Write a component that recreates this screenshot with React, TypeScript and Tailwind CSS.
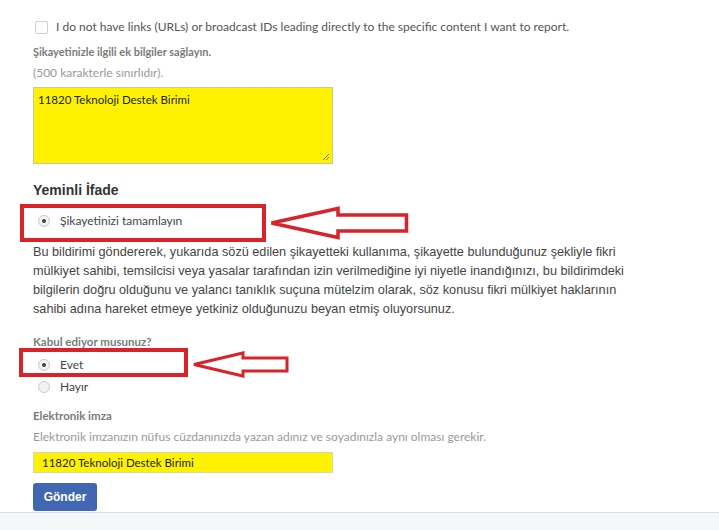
import React from 'react'

const formFont = { fontFamily: 'Lato, "Open Sans", sans-serif' }
const arial = { fontFamily: '"Liberation Sans", Arial, sans-serif' }

const Radio = ({ checked = false }: { checked?: boolean }) => (
  <span className="w-[12px] h-[12px] rounded-full border border-[#c8c8c8] bg-[#f2f2f2] flex items-center justify-center shrink-0">
    {checked && <span className="w-[4px] h-[4px] rounded-full bg-[#444]" />}
  </span>
)

const Arrow = ({ w, h, shaft, headW, stroke }: { w: number; h: number; shaft: number; headW: number; stroke: number }) => {
  const mid = h / 2
  const pts = [
    [stroke, mid],
    [headW, stroke],
    [headW, mid - shaft / 2],
    [w - stroke, mid - shaft / 2],
    [w - stroke, mid + shaft / 2],
    [headW, mid + shaft / 2],
    [headW, h - stroke],
  ]
    .map((p) => p.join(','))
    .join(' ')
  return (
    <svg width={w} height={h} viewBox={`0 0 ${w} ${h}`}>
      <polygon points={pts} fill="white" stroke="#d8232a" strokeWidth={stroke} strokeLinejoin="miter" />
    </svg>
  )
}

const App: React.FC = () => {
  return (
    <div className="relative w-[719px] h-[530px] bg-white overflow-hidden">
      <div className="pl-[33px] pt-[19px]">
        <div className="flex items-center h-[16px] gap-[8px] pl-[2px]" style={formFont}>
          <span className="w-[13px] h-[13px] rounded-[2px] border border-[#cfcfcf] bg-white" />
          <span className="text-[12px] text-[#555]">
            I do not have links (URLs) or broadcast IDs leading directly to the specific content I want to report.
          </span>
        </div>
        <div className="mt-[9px] h-[16px] text-[11px] font-bold text-[#7a7a7a] leading-[16px]" style={formFont}>
          Şikayetinizle ilgili ek bilgiler sağlayın.
        </div>
        <div className="mt-[5px] h-[16px] text-[12px] text-[#9a9a9a] leading-[16px]" style={formFont}>
          (500 karakterle sınırlıdır).
        </div>
        <div
          className="mt-[6px] w-[300px] h-[77px] bg-[#fff200] border border-[#c9c9a0] px-[4px] pt-[3px] text-[11.5px] text-[#222] relative"
          style={formFont}
        >
          11820 Teknoloji Destek Birimi
          <svg className="absolute right-[2px] bottom-[2px]" width="8" height="8" viewBox="0 0 8 8">
            <path d="M7 1 L1 7 M7 4 L4 7" stroke="#777" strokeWidth="1" />
          </svg>
        </div>
        <div className="mt-[17px] h-[18px] text-[14px] font-bold text-[#333] leading-[18px]" style={arial}>
          Yeminli İfade
        </div>
        <div className="mt-[14px] h-[16px] flex items-center gap-[10px] pl-[5px]" style={formFont}>
          <Radio checked />
          <span className="text-[12px] text-[#444]">Şikayetinizi tamamlayın</span>
        </div>
        <p className="mt-[14px] w-[618px] text-[12.7px] leading-[19px] text-[#444]" style={arial}>
          Bu bildirimi göndererek, yukarıda sözü edilen şikayetteki kullanıma, şikayette bulunduğunuz şekliyle fikri mülkiyet sahibi, temsilcisi veya yasalar tarafından izin verilmediğine iyi niyetle inandığınızı, bu bildirimdeki bilgilerin doğru olduğunu ve yalancı tanıklık suçuna mütelzim olarak, söz konusu fikri mülkiyet haklarının sahibi adına hareket etmeye yetkiniz olduğunuzu beyan etmiş oluyorsunuz.
        </p>
        <div className="mt-[15px] h-[16px] text-[11.5px] font-bold text-[#7a7a7a] leading-[16px]" style={formFont}>
          Kabul ediyor musunuz?
        </div>
        <div className="mt-[7px] h-[16px] flex items-center gap-[10px] pl-[5px]" style={formFont}>
          <Radio checked />
          <span className="text-[12px] text-[#444]">Evet</span>
        </div>
        <div className="mt-[6px] h-[16px] flex items-center gap-[10px] pl-[5px]" style={formFont}>
          <Radio />
          <span className="text-[12px] text-[#444]">Hayır</span>
        </div>
        <div className="mt-[13px] h-[16px] text-[11.5px] font-bold text-[#7a7a7a] leading-[16px]" style={formFont}>
          Elektronik imza
        </div>
        <div className="mt-[5px] h-[16px] text-[12px] text-[#9a9a9a] leading-[16px]" style={formFont}>
          Elektronik imzanızın nüfus cüzdanınızda yazan adınız ve soyadınızla aynı olması gerekir.
        </div>
        <div
          className="mt-[7px] w-[300px] h-[21px] bg-[#fff200] border border-[#d8d8b0] pl-[8px] flex items-center text-[11.5px] text-[#222]"
          style={formFont}
        >
          11820 Teknoloji Destek Birimi
        </div>
        <button
          className="mt-[10px] w-[64px] h-[28px] rounded-[3px] bg-[#4267b2] text-white text-[12px] font-bold block"
          style={arial}
        >
          Gönder
        </button>
      </div>
      <div className="absolute left-0 right-0 top-[512px] bottom-0 bg-[#f6f7f9] border-t border-[#dddfe2]" />

      <div className="absolute left-[20px] top-[204px] w-[246px] h-[38px] border-[4px] border-[#d8232a]" />
      <div className="absolute left-[268px] top-[205px]">
        <Arrow w={142} h={36} shaft={16} headW={70} stroke={3.5} />
      </div>
      <div className="absolute left-[19px] top-[348px] w-[169px] h-[29px] border-[4px] border-[#d8232a]" />
      <div className="absolute left-[191px] top-[350px]">
        <Arrow w={99} h={29} shaft={13} headW={52} stroke={3} />
      </div>
    </div>
  )
}

export default App
